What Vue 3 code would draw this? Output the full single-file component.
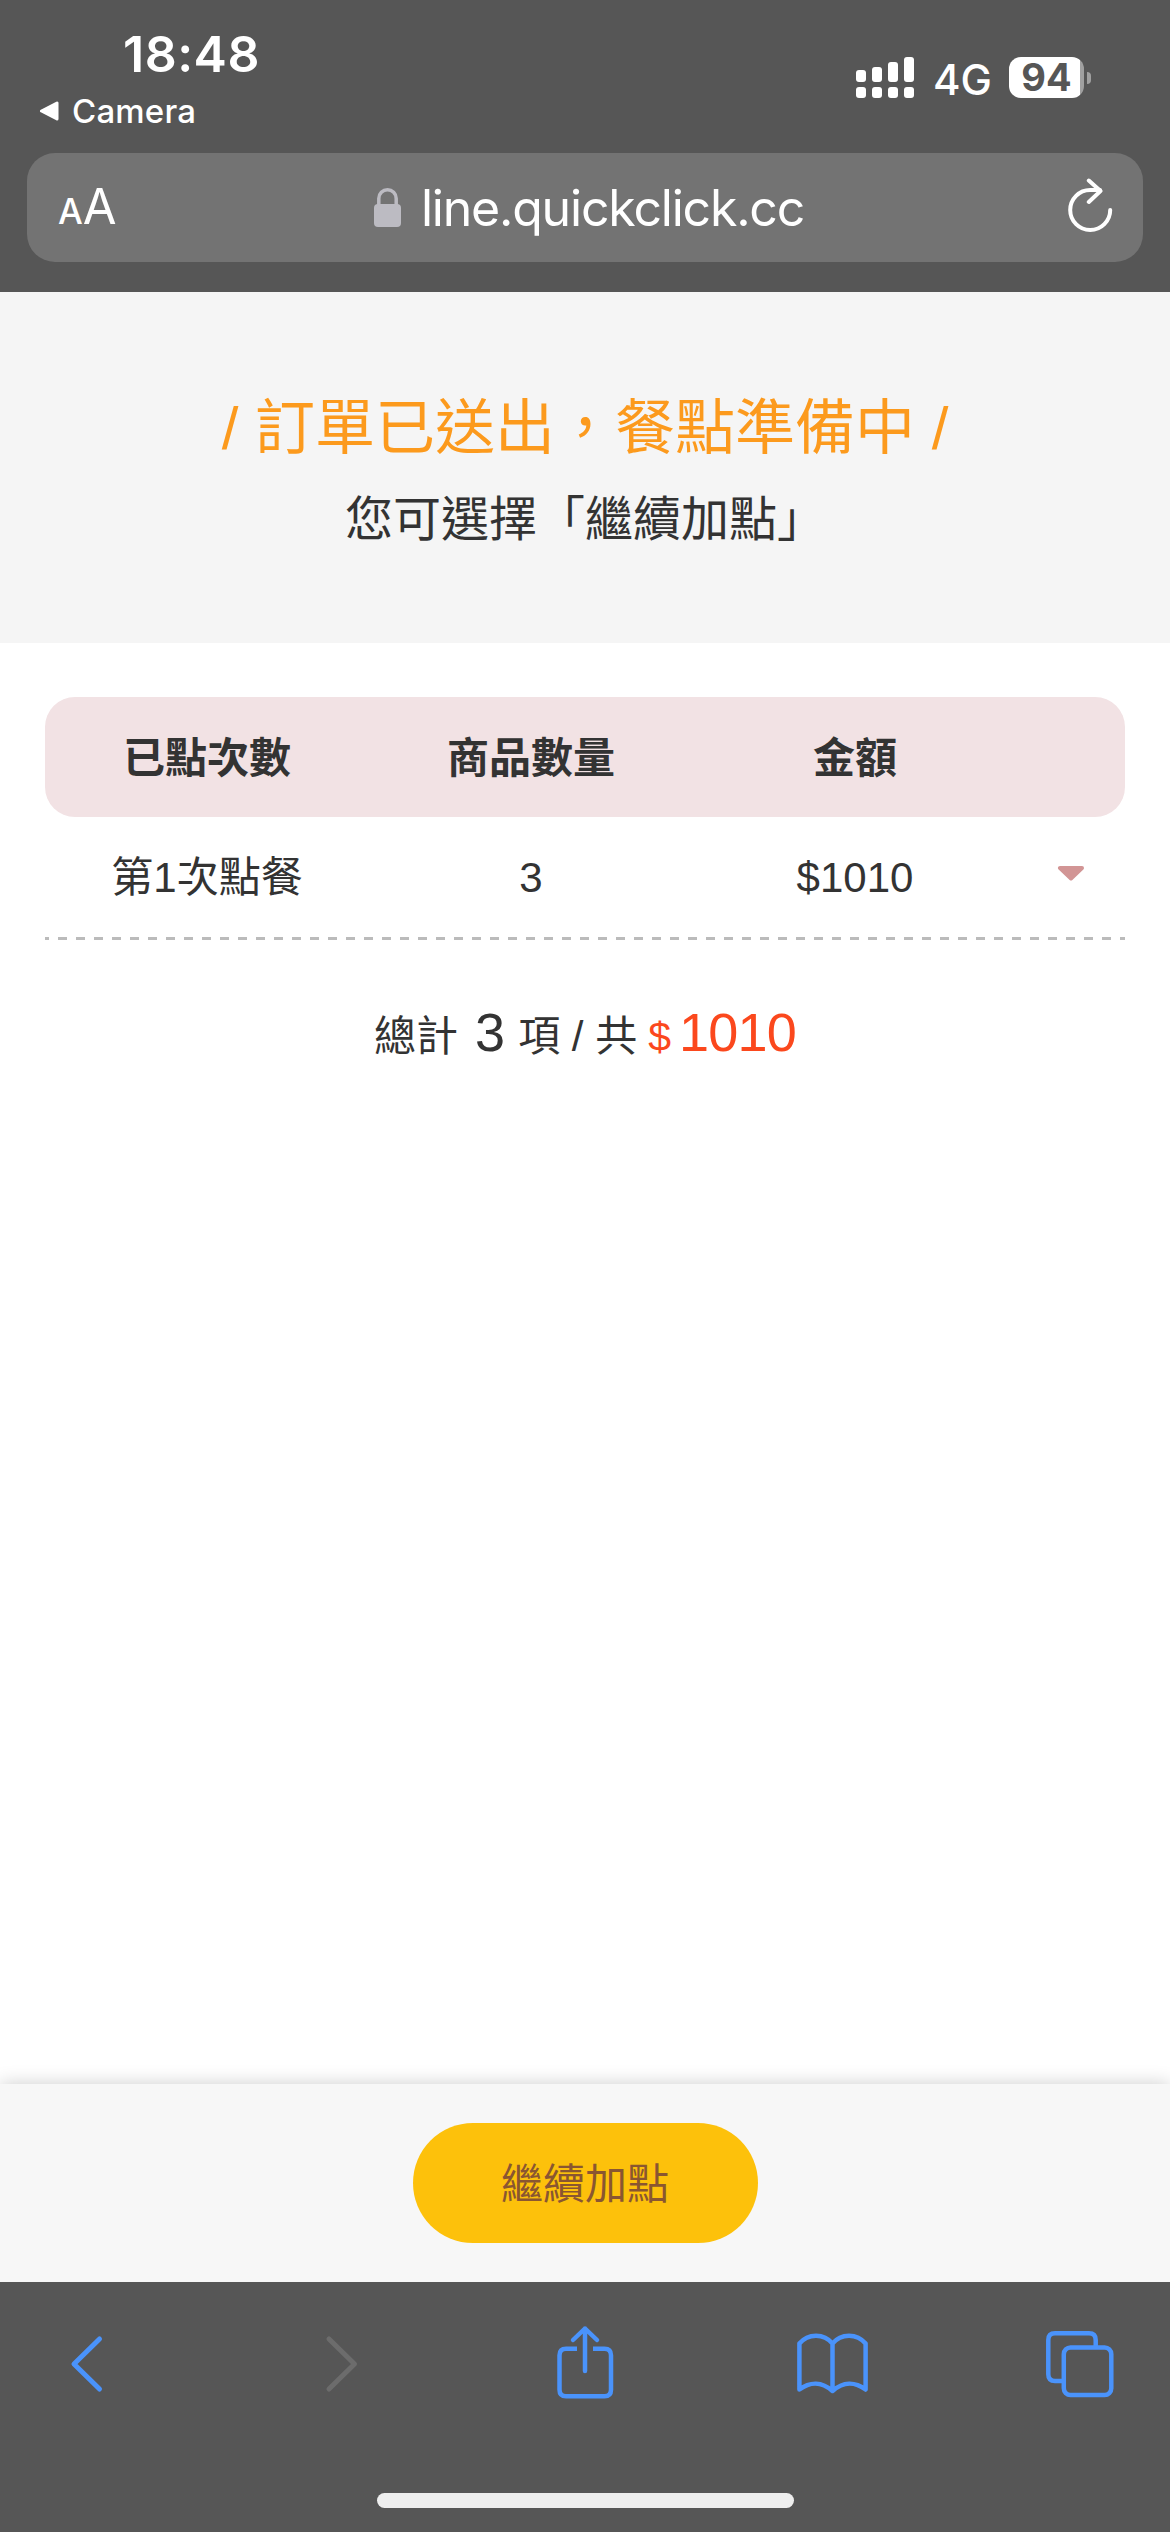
<template>
  <div class="screen">
    <!-- 瀏覽器頂部 -->
    <header class="browser-top">
      <div class="status-bar">
        <div class="status-left">
          <div class="clock">18:48</div>
          <div class="back-app">
            <svg class="back-triangle" viewBox="0 0 20 20">
              <path d="M18 2v16L2.500 10z" />
            </svg>
            <span>Camera</span>
          </div>
        </div>
        <div class="status-right">
          <svg class="signal" viewBox="0 0 58 41">
            <rect x="0" y="13" width="10" height="12" rx="3" />
            <rect x="16" y="10" width="10" height="15" rx="3" />
            <rect x="32" y="5" width="10" height="20" rx="3" />
            <rect x="48" y="0" width="10" height="25" rx="3" />
            <rect v-for="n in 4" :key="n" :x="(n - 1) * 16" y="30" width="10" height="11" rx="3" />
          </svg>
          <span class="network">4G</span>
          <div class="battery">
            <div class="battery-body">94</div>
            <div class="battery-cap"></div>
          </div>
        </div>
      </div>

      <div class="address-bar">
        <div class="text-size"><span class="small-a">A</span><span class="big-a">A</span></div>
        <div class="address">
          <svg class="lock" viewBox="0 0 27 39">
            <rect x="0" y="16" width="27" height="23" rx="4" />
            <path d="M4.800 18v-7.500a8.700 8.700 0 0 1 17.400 0V18" />
          </svg>
          <span class="url">line.quickclick.cc</span>
        </div>
        <svg class="reload" viewBox="0 0 46 56">
          <path d="M42.200 32a20 20 0 1 1-20-20H32" />
          <path d="M20.800 2.500 32.500 13 20.800 24" />
        </svg>
      </div>
    </header>

    <!-- 訂單狀態 -->
    <section class="hero">
      <h1 class="hero-title">/ 訂單已送出，餐點準備中 /</h1>
      <p class="hero-sub">您可選擇「繼續加點」</p>
    </section>

    <!-- 點餐紀錄 -->
    <main class="content">
      <div class="row row-head">
        <div v-for="col in columns" :key="col">{{ col }}</div>
      </div>
      <div v-for="order in orders" :key="order.index" class="row row-order">
        <div>第{{ order.index }}次點餐</div>
        <div>{{ order.count }}</div>
        <div>${{ order.price }}</div>
        <svg class="arrow" viewBox="0 0 28 16">
          <path d="M3 3h22L14 13.500z" />
        </svg>
      </div>
      <div class="dashed"></div>

      <div class="total">
        <span>總計</span>
        <span class="total-count">{{ totalCount }}</span>
        <span>項 / 共</span>
        <span class="currency">$</span>
        <span class="total-price">{{ totalPrice }}</span>
      </div>
    </main>

    <footer class="action-bar">
      <button class="add-btn">繼續加點</button>
    </footer>

    <!-- 瀏覽器工具列 -->
    <nav class="toolbar">
      <div class="tools">
        <svg class="tool" viewBox="0 0 72 80">
          <path d="M46.500 14 21 39l25.500 25" />
        </svg>
        <svg class="tool disabled" viewBox="0 0 72 80">
          <path d="M28 14l25.500 25L28 64" />
        </svg>
        <svg class="tool thin" viewBox="0 0 72 80">
          <path class="flat" d="M28 23.700h-11q-6.500 0-6.500 6.500v34.500q0 6.500 6.500 6.500h38.500q6.500 0 6.500-6.500V30.200q0-6.500-6.500-6.500H44" />
          <path d="M36 46V3.500M24 15 36 3.500 48 15" />
        </svg>
        <svg class="tool thin" viewBox="0 0 72 80">
          <path d="M35.500 18.500C27 8 11 8 2.400 18.500V64.500C13 56.500 25 56.500 35.500 66 46 56.500 58 56.500 68.600 64.500V18.500C60 8 44 8 35.500 18.500V66" />
        </svg>
        <svg class="tool thin" viewBox="0 0 72 80">
          <path class="flat" d="M17 56h-7q-6.700 0-6.700-6.700V15q0-6.700 6.700-6.700h34q6.700 0 6.700 6.700v6" />
          <rect x="18.800" y="22.500" width="47.500" height="47.500" rx="6.700" />
        </svg>
      </div>
      <div class="home-indicator"></div>
    </nav>
  </div>
</template>

<script setup>
import { computed, ref } from 'vue'

const columns = ['已點次數', '商品數量', '金額']

const orders = ref([{ index: 1, count: 3, price: 1010 }])

const totalCount = computed(() => orders.value.reduce((sum, o) => sum + o.count, 0))
const totalPrice = computed(() => orders.value.reduce((sum, o) => sum + o.price, 0))
</script>

<style>
body {
  margin: 0;
}
</style>

<style scoped>
.screen {
  display: flex;
  flex-direction: column;
  width: 1170px;
  height: 2532px;
  background: #fff;
  color: #333;
  font-family: "Liberation Sans", "Noto Sans CJK TC", sans-serif;
  overflow: hidden;
}

.browser-top {
  box-sizing: border-box;
  height: 292px;
  padding: 0 27px;
  background: #565656;
  color: #fff;
  font-family: Inter, sans-serif;
}

.status-bar {
  display: flex;
  justify-content: space-between;
  height: 153px;
}

.status-left {
  padding: 24px 0 0 12px;
}

.clock {
  padding-left: 84px;
  font-size: 50px;
  font-weight: 600;
  line-height: 60px;
  letter-spacing: 0.5px;
}

.back-app {
  display: flex;
  align-items: center;
  gap: 13px;
  margin-top: 7px;
  font-size: 33px;
  font-weight: 500;
  line-height: 40px;
  letter-spacing: 0.2px;
}

.back-triangle {
  width: 20px;
  height: 20px;
  fill: #fff;
  stroke: #fff;
  stroke-width: 3;
  stroke-linejoin: round;
}

.status-right {
  display: flex;
  align-items: center;
  height: 41px;
  padding: 57px 52px 0 0;
}

.signal {
  width: 58px;
  height: 41px;
  margin-right: 19px;
  fill: #fff;
}

.network {
  width: 76px;
  padding-top: 3px;
  font-size: 42px;
  font-weight: 500;
  line-height: 41px;
}

.battery {
  display: flex;
  align-items: center;
  gap: 3px;
}

.battery-body {
  width: 75px;
  height: 41px;
  border-radius: 12px;
  background: linear-gradient(90deg, #fff 71px, #a0a0a0 71px);
  color: #565656;
  font-size: 38px;
  font-weight: 700;
  line-height: 41px;
  text-align: center;
}

.battery-cap {
  width: 4px;
  height: 12px;
  border-radius: 0 5px 5px 0;
  background: #a0a0a0;
}

.address-bar {
  box-sizing: border-box;
  display: flex;
  align-items: center;
  justify-content: space-between;
  height: 109px;
  padding: 0 29px 0 31px;
  border-radius: 28px;
  background: #737373;
}

.text-size {
  width: 60px;
  padding-top: 10px;
  line-height: 60px;
  white-space: nowrap;
}

.small-a {
  font-size: 35px;
  font-weight: 500;
}

.big-a {
  font-size: 49px;
}

.address {
  display: flex;
  align-items: center;
  gap: 20px;
  margin-right: 8px;
}

.lock {
  width: 27px;
  height: 39px;
  fill: #bcbbc2;
}

.lock path {
  fill: none;
  stroke: #bcbbc2;
  stroke-width: 3.5;
}

.url {
  font-size: 50px;
  line-height: 60px;
  letter-spacing: -1.2px;
}

.reload {
  width: 46px;
  height: 56px;
  margin-bottom: 3px;
  fill: none;
  stroke: #fff;
  stroke-width: 4;
  stroke-linecap: round;
  stroke-linejoin: round;
}

.hero {
  box-sizing: border-box;
  height: 351px;
  padding-top: 92px;
  background: #f5f5f5;
  text-align: center;
}

.hero-title {
  margin: 0;
  color: #fc9a1d;
  font-size: 60px;
  font-weight: 400;
  line-height: 90px;
}

.hero-sub {
  margin: 11px 0 0;
  font-size: 48px;
  line-height: 70px;
}

.content {
  flex: 1;
  padding: 54px 45px 0;
}

.row {
  box-sizing: border-box;
  display: grid;
  grid-template-columns: repeat(3, 324px) 108px;
  align-items: center;
  justify-items: center;
  height: 120px;
  padding-top: 3px;
  font-size: 42px;
  line-height: 60px;
}

.row-head {
  border-radius: 30px;
  background: #f2e2e4;
  font-weight: 700;
}

.row-order {
  padding-top: 2px;
}

.arrow {
  width: 28px;
  height: 16px;
  margin-bottom: 11px;
  fill: #d29595;
  stroke: #d29595;
  stroke-width: 4;
  stroke-linejoin: round;
}

.dashed {
  height: 3px;
  background: repeating-linear-gradient(90deg, #bbb 0 4.5px, transparent 4.5px 13.5px, #bbb 13.5px 18px);
}

.total {
  display: flex;
  align-items: baseline;
  justify-content: center;
  margin-top: 52px;
  font-size: 42px;
  line-height: 80px;
}

.total-count {
  margin: 0 13px 0 17px;
  font-size: 54px;
}

.currency {
  margin: 0 8px 0 11px;
  color: #fb481d;
  font-size: 41px;
}

.total-price {
  color: #fb481d;
  font-size: 54px;
  letter-spacing: -0.8px;
}

.action-bar {
  box-sizing: border-box;
  display: flex;
  align-items: center;
  justify-content: center;
  height: 198px;
  background: #f7f7f7;
  box-shadow: 0 0 18px rgba(0, 0, 0, 0.2);
}

.add-btn {
  width: 345px;
  height: 120px;
  padding: 0 0 6px;
  border: none;
  border-radius: 60px;
  background: #fdc10b;
  color: #8a5631;
  font-family: inherit;
  font-size: 42px;
}

.toolbar {
  position: relative;
  box-sizing: border-box;
  height: 250px;
  padding-top: 43px;
  background: #565656;
}

.tools {
  display: flex;
  justify-content: space-between;
  padding: 0 53px;
}

.tool {
  width: 72px;
  height: 80px;
  fill: none;
  stroke: #4a93fb;
  stroke-width: 5;
  stroke-linecap: round;
  stroke-linejoin: round;
}

.tool.thin {
  stroke-width: 4.5;
}

.tool .flat {
  stroke-linecap: butt;
}

.tool.disabled {
  stroke: #6c6c6c;
}

.home-indicator {
  width: 417px;
  height: 15px;
  margin: 88px auto 0;
  border-radius: 8px;
  background: #eee;
}
</style>
